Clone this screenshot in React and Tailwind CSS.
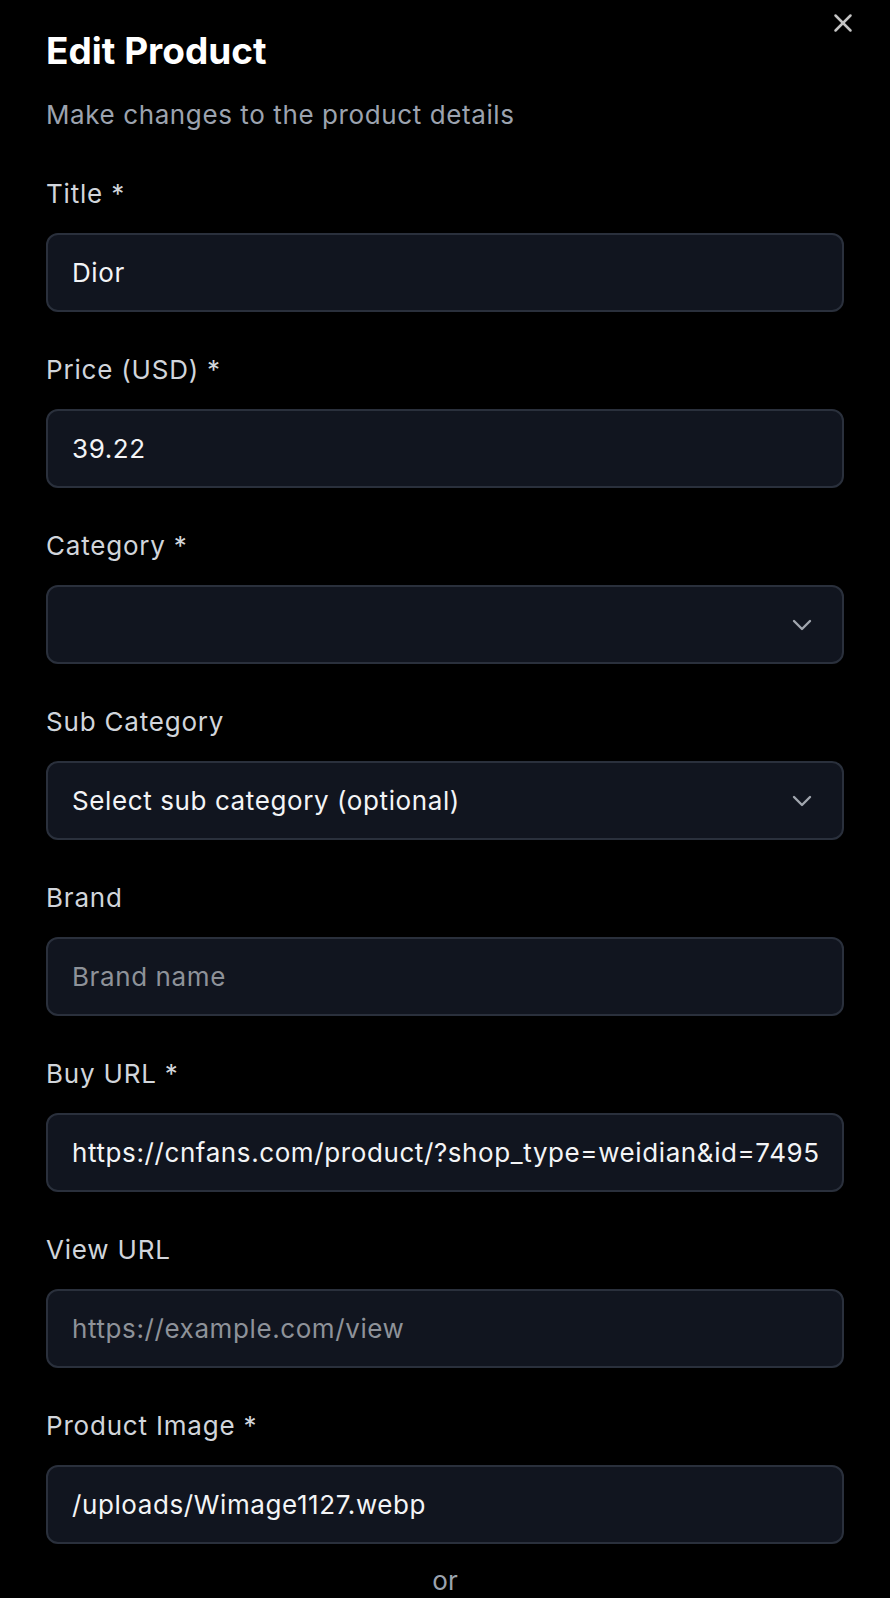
import { X } from "lucide-react";

const fields = [
  { label: "Title *", value: "Dior" },
  { label: "Price (USD) *", value: "39.22" },
  { label: "Category *", select: true, value: "" },
  { label: "Sub Category", select: true, value: "Select sub category (optional)" },
  { label: "Brand", placeholder: "Brand name" },
  { label: "Buy URL *", value: "https://cnfans.com/product/?shop_type=weidian&id=7495012384" },
  { label: "View URL", placeholder: "https://example.com/view" },
  { label: "Product Image *", value: "/uploads/Wimage1127.webp" },
];

const Chevron = () => (
  <svg width="20" height="12" viewBox="0 0 20 12" fill="none" className="text-[#a1a6ae]">
    <path d="M2 2l8 8 8-8" stroke="currentColor" strokeWidth="2.4" strokeLinecap="round" strokeLinejoin="round" />
  </svg>
);

const Field = ({ label, value, placeholder, select }) => (
  <div className="flex flex-col">
    <label className="h-[36px] text-[26px] leading-[36px] tracking-[0.8px] text-[#d1d5db]">{label}</label>
    {select ? (
      <div className="mt-[21px] h-[79px] rounded-[12px] border-2 border-[#2a303c] bg-[#11151f] pl-[24px] pr-[30px] flex items-center justify-between">
        <span className="text-[26px] tracking-[0.6px] text-[#f3f4f6]">{value}</span>
        <Chevron />
      </div>
    ) : (
      <input
        readOnly
        defaultValue={value}
        placeholder={placeholder}
        className="mt-[21px] h-[79px] w-full rounded-[12px] border-2 border-[#2a303c] bg-[#11151f] px-[24px] text-[26px] tracking-[0.6px] text-[#f3f4f6] placeholder:text-[#8e9299] outline-none"
      />
    )}
  </div>
);

const App = () => {
  return (
    <div className="relative min-h-screen bg-black px-[46px] pt-[29px] pb-[40px] font-['Inter',sans-serif]">
      <button className="absolute right-[32px] top-[8px] text-[#c4c4c4]">
        <X className="w-[30px] h-[30px]" strokeWidth={2} />
      </button>

      <h2 className="text-[37px] leading-[44px] font-bold text-white">Edit Product</h2>
      <p className="mt-[24px] text-[26px] leading-[36px] tracking-[0.6px] text-[#9ca3af]">
        Make changes to the product details
      </p>

      <div className="mt-[43px] flex flex-col gap-[40px]">
        {fields.map((f) => (
          <Field key={f.label} {...f} />
        ))}
      </div>

      <p className="mt-[19px] text-center text-[26px] leading-[36px] text-[#9ca3af]">or</p>
    </div>
  );
};

export default App;
